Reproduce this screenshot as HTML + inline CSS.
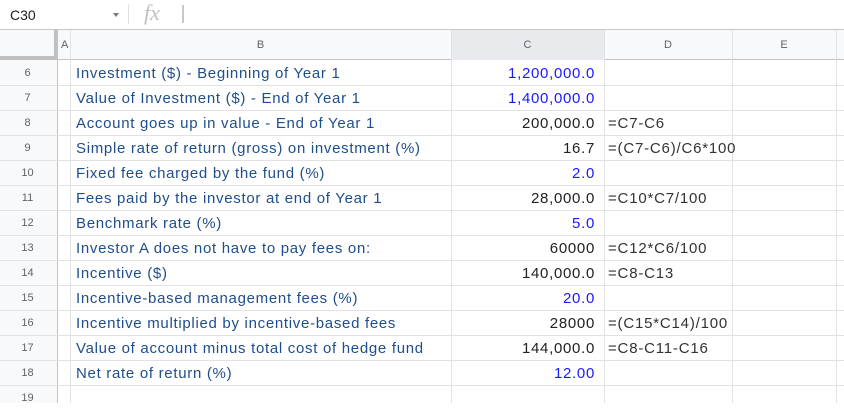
<!DOCTYPE html>
<html><head><meta charset="utf-8"><style>
*{margin:0;padding:0;box-sizing:border-box}
body{width:844px;height:403px;overflow:hidden;background:#fff;font-family:"Liberation Sans",sans-serif;position:relative}
.a{position:absolute}
.vl{position:absolute;top:30px;bottom:0;width:1px;background:#e2e2e2}
.hl{position:absolute;left:0;right:0;height:1px;background:#e2e2e2}
.rn{position:absolute;left:0;width:55px;text-align:center;font-size:11px;color:#5f6368;line-height:25px}
.b{position:absolute;left:76px;font-size:15px;letter-spacing:0.7px;color:#1f4e8c;line-height:25px;white-space:nowrap}
.c{position:absolute;left:451px;width:144px;text-align:right;font-size:15px;letter-spacing:0.7px;line-height:25px;white-space:nowrap}
.d{position:absolute;left:608px;font-size:15px;letter-spacing:0.8px;color:#333;line-height:25px;white-space:nowrap}
.bl{color:#1a1aff}.bk{color:#222}
.h{position:absolute;top:30px;height:30px;line-height:30px;text-align:center;font-size:11px;color:#5f6368}
</style></head><body>
<div class="a" style="left:0;top:0;width:844px;height:30px;border-bottom:1px solid #c7c7c7;background:#fff"></div>
<div class="a" style="left:10px;top:7px;font-size:14px;color:#202124">C30</div>
<div class="a" style="left:113px;top:13px;width:0;height:0;border-left:3px solid transparent;border-right:3px solid transparent;border-top:4px solid #777"></div>
<div class="a" style="left:128px;top:4px;width:1px;height:20px;background:#e0e0e0"></div>
<div class="a" style="left:144px;top:0px;font-size:22px;font-style:italic;color:#c0c0c0;font-family:'Liberation Serif',serif">fx</div>
<div class="a" style="left:182px;top:5px;width:2px;height:18px;background:#c8c8c8"></div>
<div class="a" style="left:0;top:30px;width:844px;height:30px;background:#f8f9fa;border-bottom:1px solid #c4c4c4"></div>
<div class="a" style="left:451px;top:30px;width:153px;height:30px;background:#e8eaed"></div>
<div class="a" style="left:0;top:30px;width:58px;height:373px;background:#f8f9fa"></div>
<div class="a" style="left:54px;top:30px;width:4px;height:30px;background:#c0c0c0"></div>
<div class="a" style="left:0;top:56px;width:58px;height:4px;background:#c0c0c0"></div>
<div class="a" style="left:57px;top:30px;width:1px;height:373px;background:#c4c4c4"></div>
<div class="vl" style="left:70px"></div>
<div class="vl" style="left:451px"></div>
<div class="vl" style="left:604px"></div>
<div class="vl" style="left:732px"></div>
<div class="vl" style="left:836px"></div>
<div class="h" style="left:58px;width:12px;text-align:left;padding-left:3px">A</div>
<div class="h" style="left:70px;width:381px">B</div>
<div class="h" style="left:451px;width:153px">C</div>
<div class="h" style="left:604px;width:128px">D</div>
<div class="h" style="left:732px;width:104px">E</div>
<div class="hl" style="top:85px"></div><div class="hl" style="top:110px"></div><div class="hl" style="top:135px"></div><div class="hl" style="top:160px"></div><div class="hl" style="top:185px"></div><div class="hl" style="top:210px"></div><div class="hl" style="top:235px"></div><div class="hl" style="top:260px"></div><div class="hl" style="top:285px"></div><div class="hl" style="top:310px"></div><div class="hl" style="top:335px"></div><div class="hl" style="top:360px"></div><div class="hl" style="top:385px"></div>
<div class="rn" style="top:61px">6</div><div class="rn" style="top:86px">7</div><div class="rn" style="top:111px">8</div><div class="rn" style="top:136px">9</div><div class="rn" style="top:161px">10</div><div class="rn" style="top:186px">11</div><div class="rn" style="top:211px">12</div><div class="rn" style="top:236px">13</div><div class="rn" style="top:261px">14</div><div class="rn" style="top:286px">15</div><div class="rn" style="top:311px">16</div><div class="rn" style="top:336px">17</div><div class="rn" style="top:361px">18</div><div class="rn" style="top:386px">19</div>
<div class="b" style="top:61px">Investment ($) - Beginning of Year 1</div>
<div class="b" style="top:86px">Value of Investment ($) - End of Year 1</div>
<div class="b" style="top:111px">Account goes up in value - End of Year 1</div>
<div class="b" style="top:136px">Simple rate of return (gross) on investment (%)</div>
<div class="b" style="top:161px">Fixed fee charged by the fund (%)</div>
<div class="b" style="top:186px">Fees paid by the investor at end of Year 1</div>
<div class="b" style="top:211px">Benchmark rate (%)</div>
<div class="b" style="top:236px">Investor A does not have to pay fees on:</div>
<div class="b" style="top:261px">Incentive ($)</div>
<div class="b" style="top:286px">Incentive-based management fees (%)</div>
<div class="b" style="top:311px">Incentive multiplied by incentive-based fees</div>
<div class="b" style="top:336px">Value of account minus total cost of hedge fund</div>
<div class="b" style="top:361px">Net rate of return (%)</div>
<div class="c bl" style="top:61px">1,200,000.0</div>
<div class="c bl" style="top:86px">1,400,000.0</div>
<div class="c bk" style="top:111px">200,000.0</div>
<div class="c bk" style="top:136px">16.7</div>
<div class="c bl" style="top:161px">2.0</div>
<div class="c bk" style="top:186px">28,000.0</div>
<div class="c bl" style="top:211px">5.0</div>
<div class="c bk" style="top:236px">60000</div>
<div class="c bk" style="top:261px">140,000.0</div>
<div class="c bl" style="top:286px">20.0</div>
<div class="c bk" style="top:311px">28000</div>
<div class="c bk" style="top:336px">144,000.0</div>
<div class="c bl" style="top:361px">12.00</div>
<div class="d" style="top:111px">=C7-C6</div>
<div class="d" style="top:136px">=(C7-C6)/C6*100</div>
<div class="d" style="top:186px">=C10*C7/100</div>
<div class="d" style="top:236px">=C12*C6/100</div>
<div class="d" style="top:261px">=C8-C13</div>
<div class="d" style="top:311px">=(C15*C14)/100</div>
<div class="d" style="top:336px">=C8-C11-C16</div>
</body></html>
